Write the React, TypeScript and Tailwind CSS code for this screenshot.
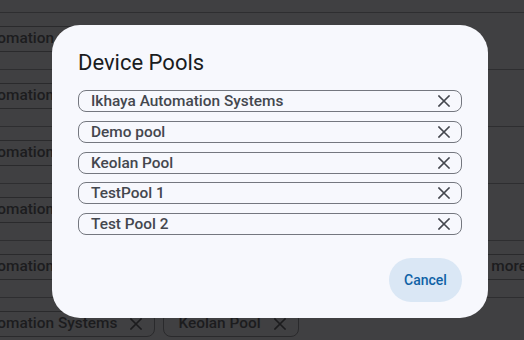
import React from "react";

const font = { fontFamily: "Roboto, 'Noto Sans', sans-serif" };

function XIcon({ className = "" }: { className?: string }) {
  return (
    <svg width="12" height="12" viewBox="0 0 12 12" className={className}>
      <path d="M1 1 L11 11 M11 1 L1 11" stroke="currentColor" strokeWidth="1.6" strokeLinecap="square" fill="none" />
    </svg>
  );
}

function BgChip({ children, className = "" }: { children: React.ReactNode; className?: string }) {
  return (
    <div className={`flex h-[26px] items-center gap-[13px] rounded-[8px] border border-[#2a2a2c] pl-[14px] pr-[12px] text-[15.4px] font-medium text-[#1c1c1e] ${className}`}>
      <span>{children}</span>
      <XIcon className="text-[#1c1c1e]" />
    </div>
  );
}

function BgRow({ children }: { children?: React.ReactNode }) {
  return (
    <div className="h-[57px] border-t border-[#2e2e30] pt-[13px]">
      <div className="flex items-center gap-[8px]">{children}</div>
    </div>
  );
}

const pools = ["Ikhaya Automation Systems", "Demo pool", "Keolan Pool", "TestPool 1", "Test Pool 2"];

export default function App() {
  return (
    <div className="relative h-[340px] w-[524px] overflow-hidden bg-[#404042]" style={font}>
      <div className="pt-[12px]">
        {[0, 1, 2, 3].map((i) => (
          <BgRow key={i}>
            <BgChip className="ml-[-90px]">Ikhaya Automation Systems</BgChip>
          </BgRow>
        ))}
        <BgRow>
          <BgChip className="ml-[-90px]">Ikhaya Automation Systems</BgChip>
          <div className="ml-auto mr-[-16px] flex h-[26px] items-center rounded-[8px] border border-[#2a2a2c] px-[12px] text-[15.4px] font-medium text-[#1c1c1e]">
            +2 more
          </div>
        </BgRow>
        <BgRow>
          <BgChip className="ml-[-90px]">Ikhaya Automation Systems</BgChip>
          <BgChip>Keolan Pool</BgChip>
        </BgRow>
      </div>

      <div className="absolute inset-0 pl-[52px] pt-[25px]">
        <div className="flex h-[293px] w-[436px] flex-col rounded-[28px] bg-[#f7f8fd] px-[26px] pt-[24px]">
          <h2 className="text-[22px] leading-[28px] text-[#1a1c1e]">Device Pools</h2>
          <div className="mt-[13px] flex flex-col gap-[8.75px]">
            {pools.map((p) => (
              <div
                key={p}
                className="flex h-[22px] items-center justify-between rounded-[8px] border border-[#74777f] pl-[12px] pr-[11px] text-[15.4px] font-medium text-[#44474e]"
              >
                <span className="leading-[20px]">{p}</span>
                <XIcon className="text-[#44474e]" />
              </div>
            ))}
          </div>
          <div className="mt-[23px] flex justify-end">
            <button className="h-[44px] w-[73px] rounded-full bg-[#dae7f5] text-[14px] font-medium text-[#0f62a6]">
              Cancel
            </button>
          </div>
        </div>
      </div>
    </div>
  );
}
